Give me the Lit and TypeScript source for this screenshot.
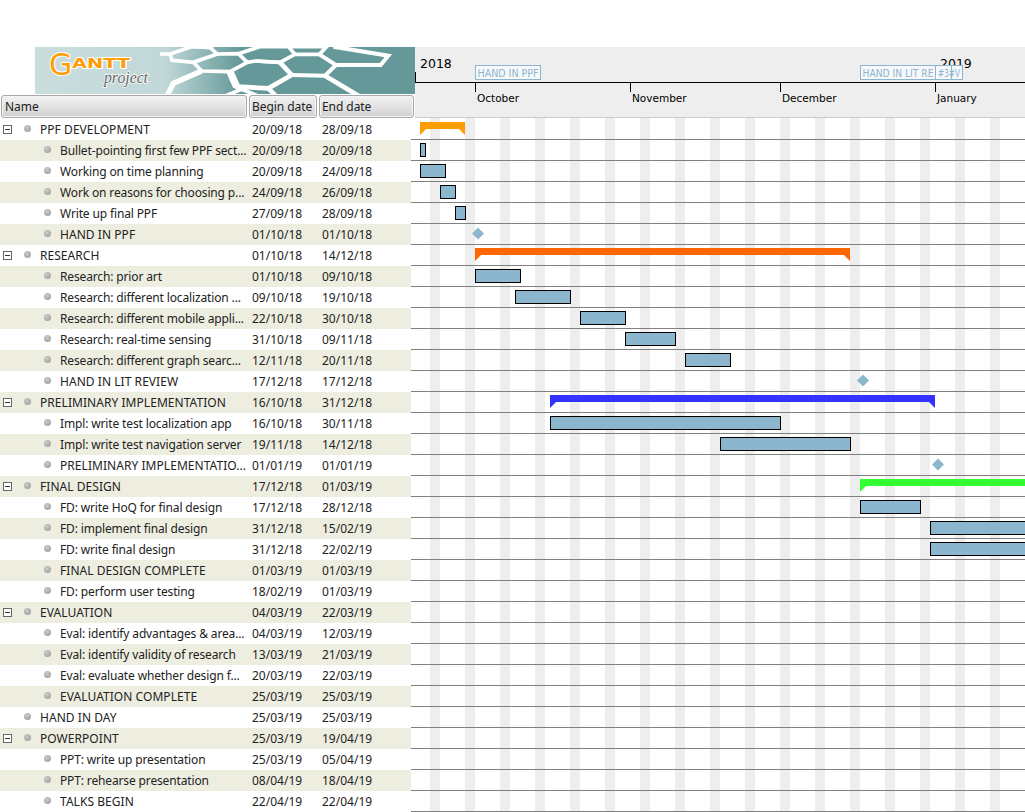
import { LitElement, html, css, svg } from "lit";
import { customElement } from "lit/decorators.js";

type Row = [string, string, string, number, ("s" | "t" | "m")];
const rows: Row[] = [
  ["PPF DEVELOPMENT", "20/09/18", "28/09/18", 0, "s"],
  ["Bullet-pointing first few PPF sect...", "20/09/18", "20/09/18", 1, "t"],
  ["Working on time planning", "20/09/18", "24/09/18", 1, "t"],
  ["Work on reasons for choosing p...", "24/09/18", "26/09/18", 1, "t"],
  ["Write up final PPF", "27/09/18", "28/09/18", 1, "t"],
  ["HAND IN PPF", "01/10/18", "01/10/18", 1, "m"],
  ["RESEARCH", "01/10/18", "14/12/18", 0, "s"],
  ["Research: prior art", "01/10/18", "09/10/18", 1, "t"],
  ["Research: different localization ...", "09/10/18", "19/10/18", 1, "t"],
  ["Research: different mobile appli...", "22/10/18", "30/10/18", 1, "t"],
  ["Research: real-time sensing", "31/10/18", "09/11/18", 1, "t"],
  ["Research: different graph searc...", "12/11/18", "20/11/18", 1, "t"],
  ["HAND IN LIT REVIEW", "17/12/18", "17/12/18", 1, "m"],
  ["PRELIMINARY IMPLEMENTATION", "16/10/18", "31/12/18", 0, "s"],
  ["Impl: write test localization app", "16/10/18", "30/11/18", 1, "t"],
  ["Impl: write test navigation server", "19/11/18", "14/12/18", 1, "t"],
  ["PRELIMINARY IMPLEMENTATIO...", "01/01/19", "01/01/19", 1, "m"],
  ["FINAL DESIGN", "17/12/18", "01/03/19", 0, "s"],
  ["FD: write HoQ for final design", "17/12/18", "28/12/18", 1, "t"],
  ["FD: implement final design", "31/12/18", "15/02/19", 1, "t"],
  ["FD: write final design", "31/12/18", "22/02/19", 1, "t"],
  ["FINAL DESIGN COMPLETE", "01/03/19", "01/03/19", 1, "m"],
  ["FD: perform user testing", "18/02/19", "01/03/19", 1, "t"],
  ["EVALUATION", "04/03/19", "22/03/19", 0, "s"],
  ["Eval: identify advantages & area...", "04/03/19", "12/03/19", 1, "t"],
  ["Eval: identify validity of research", "13/03/19", "21/03/19", 1, "t"],
  ["Eval: evaluate whether design f...", "20/03/19", "22/03/19", 1, "t"],
  ["EVALUATION COMPLETE", "25/03/19", "25/03/19", 1, "m"],
  ["HAND IN DAY", "25/03/19", "25/03/19", 0, "m"],
  ["POWERPOINT", "25/03/19", "19/04/19", 0, "s"],
  ["PPT: write up presentation", "25/03/19", "05/04/19", 1, "t"],
  ["PPT: rehearse presentation", "08/04/19", "18/04/19", 1, "t"],
  ["TALKS BEGIN", "22/04/19", "22/04/19", 1, "m"],
];

const X0 = 415;
const cx = (x: number) => x - X0;
const bars: [number, number, number][] = [
  [1, 420, 426], [2, 420, 446], [3, 440, 456], [4, 455, 466],
  [7, 475, 521], [8, 515, 571], [9, 580, 626], [10, 625, 676], [11, 685, 731],
  [14, 550, 781], [15, 720, 851], [18, 860, 921], [19, 930, 1040], [20, 930, 1040],
];
const summaries: [number, number, number, string][] = [
  [0, 420, 465, "#ff9c00"], [6, 475, 850, "#ff6600"], [13, 550, 935, "#3333ff"], [17, 860, 1060, "#33ff33"],
];
const diamonds: [number, number][] = [[5, 478], [12, 863], [16, 938]];

@customElement("app-root")
export class AppRoot extends LitElement {
  static styles = css`
    :host { display: block; width: 1025px; height: 812px; overflow: hidden; background: #fff; font-family: "Noto Sans", sans-serif; }
    .page { display: grid; grid-template-columns: 415px 610px; padding-top: 47px; height: 765px; }
    .left { display: flex; flex-direction: column; min-width: 0; }
    .logo { display: block; margin-left: 35px; width: 380px; height: 47px; }
    .heads { display: grid; grid-template-columns: 246px 68px 95px; gap: 2px; padding: 1px 0 0 1px; height: 24px; box-sizing: border-box; width: 415px; }
    .head { box-sizing: border-box; height: 23px; border: 1px solid #a8a8a8; border-radius: 3px; background: linear-gradient(#f2f2f2, #dcdcdc 70%, #d0d0d0); color: #222; font-size: 12px; line-height: 21px; padding-left: 2px; box-shadow: inset 0 0 0 1px #f4f4f4; letter-spacing: -0.06px; }
    .head.first { padding-left: 3px; }
    .rowlist { margin-top: 1px; }
    .row { width: 411px; height: 21px; display: grid; grid-template-columns: 250px 70px 91px; font-size: 12px; line-height: 21px; color: #222; background: #fff; }
    .row.alt { background: #eeeee0; }
    .name { display: flex; align-items: center; white-space: nowrap; overflow: hidden; }
    .name.lower { letter-spacing: -0.14px; }
    .name.upper { letter-spacing: 0.05px; }
    .toggle { flex: none; box-sizing: border-box; width: 9px; height: 9px; margin-left: 3px; border: 1px solid #666; background: #fff; display: flex; align-items: center; justify-content: center; }
    .toggle i { display: block; width: 5px; height: 1px; background: #333; }
    .gap { flex: none; width: 12px; }
    .dot { flex: none; width: 7px; height: 7px; border-radius: 50%; background: radial-gradient(circle at 40% 35%, #cccccc, #959595); margin: -3px 9px 0 0; }
    .ind0 { flex: none; width: 24px; }
    .ind1 { flex: none; width: 44px; }
    .date { padding-left: 2px; }
    .chart { display: block; width: 610px; height: 765px; overflow: visible; }
    .chart text { font-family: "DejaVu Sans", sans-serif; fill: #000; }
    .chart text.lbl { fill: #8cb6ce; }
    .logotext { font-family: "DejaVu Sans", sans-serif; fill: #ff9c00; stroke: #fff; paint-order: stroke; stroke-linejoin: round; }
    .logosub { font-family: "Liberation Serif", serif; font-style: italic; fill: #666; stroke: #fff; stroke-width: 1.5px; paint-order: stroke; }
  `;

  private logo() {
    return html`<svg class="logo" viewBox="0 0 380 47">
      <defs>
        <linearGradient id="lg" x1="0" x2="380" y1="0" y2="0" gradientUnits="userSpaceOnUse">
          <stop offset="0" stop-color="#c9dddd"/><stop offset=".34" stop-color="#c2d8d8"/>
          <stop offset=".54" stop-color="#659999"/><stop offset="1" stop-color="#659999"/>
        </linearGradient>
      </defs>
      <rect width="380" height="47" fill="url(#lg)"/>
      <g transform="translate(125 -2) scale(.3333)" fill="none" stroke="#fff" stroke-width="11" stroke-linejoin="miter">
        <path d="M0 27 L30 27 L95 5 L150 8 L172 27 L100 52 L36 46 L30 27"/>
        <path d="M172 27 L235 26 L262 52 L210 80 L125 78 L100 52"/>
        <path d="M150 8 L160 0 M235 26 L300 5 L385 5 L405 28 L360 52 L285 48 L262 52"/>
        <path d="M385 5 L500 5 L478 28 L405 28"/>
        <path d="M360 52 L395 90 L325 130 L230 125 L210 80" stroke-width="14"/>
        <path d="M285 48 L360 52"/>
        <path d="M478 28 L528 60 L495 92 L395 90" stroke-width="12"/>
        <path d="M125 78 L40 115 L20 155" stroke-width="16"/>
        <path d="M210 80 L230 125" stroke-width="22"/>
        <path d="M190 155 L245 133 L300 155"/>
        <path d="M325 130 L350 155" stroke-width="14"/>
        <path d="M495 92 L600 155" stroke-width="14"/>
        <path d="M520 5 L685 32 L662 60 L528 60" stroke-width="12"/>
      </g>
      <text class="logotext" x="14" y="28" font-size="30" stroke-width="2">G</text>
      <text class="logotext" x="37" y="21" font-size="14" font-weight="700" stroke-width="2" textLength="58" lengthAdjust="spacingAndGlyphs">ANTT</text>
      <text class="logosub" x="69" y="36" font-size="17" textLength="44" lengthAdjust="spacingAndGlyphs">project</text>
    </svg>`;
  }

  private chart() {
    const stripes: unknown[] = [];
    for (let x = 430; x < 1025; x += 35) stripes.push(svg`<rect x=${cx(x)} y="71" width="10" height="700" fill="#eeeeee"/>`);
    const lines: unknown[] = [];
    for (let y = 139; y < 812; y += 21) lines.push(svg`<rect x="-4" y=${y - 47} width="614" height="1" fill="#808080"/>`);
    const ticks: [number, string][] = [[475, "October"], [630, "November"], [780, "December"], [935, "January"]];
    return html`<svg class="chart" viewBox="0 0 610 765">
      <rect width="610" height="70" fill="#eeeeee"/>
      <rect y="70" width="610" height="1" fill="#cccccc"/>
      ${stripes}${lines}
      <rect y="35" width="610" height="1" fill="#000"/>
      <rect x="0" y="25" width="1" height="10" fill="#000"/>
      <text x="5" y="21" font-size="12.5">2018</text>
      <text x="525" y="21" font-size="12.5">2019</text>
      ${ticks.map(([x, t]) => svg`<rect x=${cx(x)} y="35" width="1" height="10" fill="#000"/>
        <text x=${cx(x) + 2} y="55" font-size="10.5">${t}</text>`)}
      <rect x="60.5" y="18.5" width="65" height="14" fill="#f6f8fa" stroke="#8cb6ce"/>
      <text class="lbl" x="62.5" y="30" font-size="10" textLength="61" lengthAdjust="spacingAndGlyphs">HAND IN PPF</text>
      <rect x="445.5" y="18.5" width="75" height="14" fill="#f6f8fa" stroke="#8cb6ce"/>
      <rect x="520.5" y="18.5" width="16" height="14" fill="#f6f8fa" stroke="#8cb6ce"/>
      <rect x="536.5" y="18.5" width="11" height="14" fill="#f6f8fa" stroke="#8cb6ce"/>
      <text class="lbl" x="447.5" y="30" font-size="10" textLength="71" lengthAdjust="spacingAndGlyphs">HAND IN LIT RE</text>
      <text class="lbl" x="523" y="30" font-size="10" textLength="22" lengthAdjust="spacingAndGlyphs">#3#V</text>
      ${summaries.map(([r, a, b, c]) => {
        const y = 75 + 21 * r, l = cx(a), e = cx(b);
        return svg`<path d="M${l} ${y} H${e} V${y + 13} L${e - 6} ${y + 7} H${l + 6} L${l} ${y + 13} Z" fill=${c}/>`;
      })}
      ${bars.map(([r, a, b]) => svg`<rect x=${cx(a) + .5} y=${96.5 + 21 * (r - 1)} width=${b - a - 1} height="13" fill="#8cb6ce" stroke="#000"/>`)}
      ${diamonds.map(([r, x]) => {
        const y = 186.5 + 21 * (r - 5), c = cx(x);
        return svg`<path d="M${c} ${y - 6} L${c + 6} ${y} L${c} ${y + 6} L${c - 6} ${y} Z" fill="#8cb6ce"/>`;
      })}
    </svg>`;
  }

  render() {
    return html`<div class="page">
      <div class="left">
        ${this.logo()}
        <div class="heads">
          <div class="head first">Name</div><div class="head">Begin date</div><div class="head">End date</div>
        </div>
        <div class="rowlist">
          ${rows.map((r, i) => html`<div class="row ${i % 2 ? "alt" : ""}">
            <div class="name ${r[0] === r[0].toUpperCase() ? "upper" : "lower"}">
              ${r[4] === "s" ? html`<span class="toggle"><i></i></span><span class="gap"></span>` : html`<span class=${r[3] ? "ind1" : "ind0"}></span>`}
              <span class="dot"></span><span>${r[0]}</span>
            </div>
            <div class="date">${r[1]}</div><div class="date">${r[2]}</div>
          </div>`)}
        </div>
      </div>
      ${this.chart()}
    </div>`;
  }
}
